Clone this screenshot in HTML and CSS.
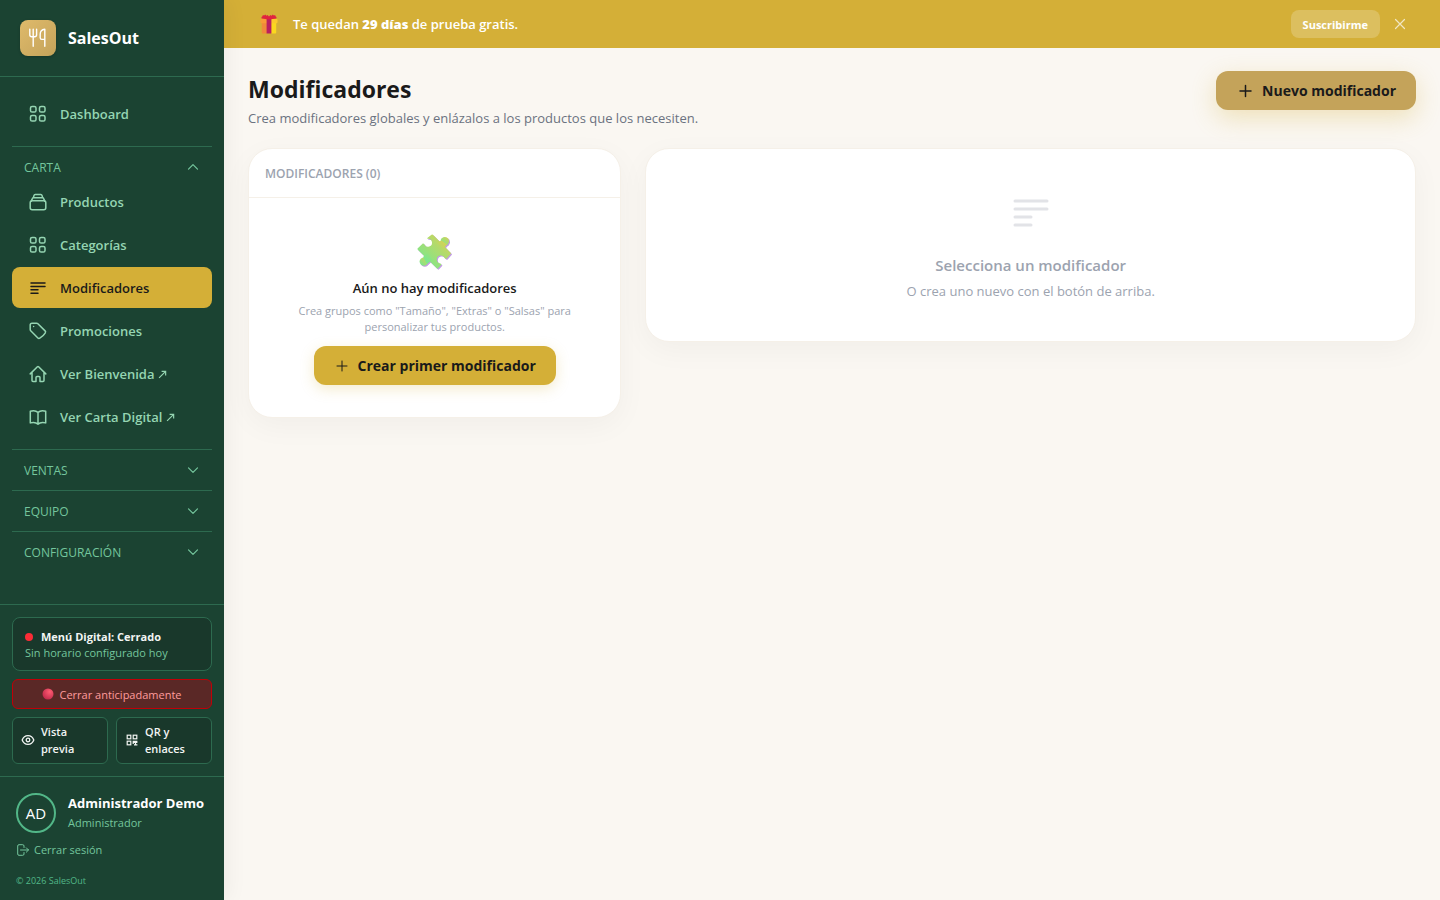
FILE: index.html
```html
<!DOCTYPE html>
<html lang="es">
<head>
  <meta charset="UTF-8">
  <meta name="viewport" content="width=device-width, initial-scale=1.0">
  <title>Modificadores - SalesOut</title>
  <link rel="stylesheet" href="styles.css">
</head>
<body>
  <div class="app">
    <aside class="sidebar">
      <div class="brand">
        <div class="brand-logo">
          <svg width="20" height="20" viewBox="0 0 20 20" fill="none" stroke="currentColor" stroke-width="1.4" stroke-linecap="round" stroke-linejoin="round">
            <path d="M1.800 1.300v5.400a2 2 0 0 0 2 2h2.800a2 2 0 0 0 2-2V1.300M5.200 1.300v17M16.800 18.300V1.300c-3 .3-4.600 2.300-4.600 5v3.400c0 1 .7 1.700 1.700 1.700h2.900"/>
          </svg>
        </div>
        <span class="brand-name">SalesOut</span>
      </div>

      <nav class="nav">
        <a class="nav-link" href="#">
          <svg class="icon" viewBox="0 0 18 18"><rect x="1.500" y="1.500" width="5.500" height="5.500" rx="1.600"/><rect x="10.500" y="1.500" width="5.500" height="5.500" rx="1.600"/><rect x="1.500" y="10.500" width="5.500" height="5.500" rx="1.600"/><rect x="10.500" y="10.500" width="5.500" height="5.500" rx="1.600"/></svg>
          Dashboard
        </a>
        <div class="nav-section open">
          <button class="nav-toggle" type="button" aria-expanded="true">
            CARTA
            <svg class="chevron" viewBox="0 0 14 14"><path d="M2.500 9.200 7 4.700l4.500 4.500"/></svg>
          </button>
          <div class="nav-list">
            <a class="nav-link" href="#">
              <svg class="icon" viewBox="0 0 18 18"><rect x="1.200" y="7.800" width="15.600" height="9" rx="2"/><path d="M2.300 8.100 3.300 5.600c.2-.6.700-.9 1.300-.9h8.800c.6 0 1.100.3 1.300.9l1 2.500M4.400 4.700l.5-2.100c.2-.7.600-1.100 1.300-1.100h5.600c.7 0 1.100.4 1.300 1.100l.5 2.100"/></svg>
              Productos
            </a>
            <a class="nav-link" href="#">
              <svg class="icon" viewBox="0 0 18 18"><rect x="1.500" y="1.500" width="5.500" height="5.500" rx="1.600"/><rect x="10.500" y="1.500" width="5.500" height="5.500" rx="1.600"/><rect x="1.500" y="10.500" width="5.500" height="5.500" rx="1.600"/><rect x="10.500" y="10.500" width="5.500" height="5.500" rx="1.600"/></svg>
              Categorías
            </a>
            <a class="nav-link active" href="#" aria-current="page">
              <svg class="icon" viewBox="0 0 18 18"><path d="M2 4h14M2 7.400h14M2 10.800h7M2 14.200h7"/></svg>
              Modificadores
            </a>
            <a class="nav-link" href="#">
              <svg class="icon" viewBox="0 0 18 18"><path d="M7.600 1.200H3a1.800 1.800 0 0 0-1.800 1.800v4.600c0 .5.200.9.500 1.200l7.200 7.200c.5.500 1.300.6 1.900.2a16 16 0 0 0 5.500-5.400c.4-.6.300-1.400-.2-1.900L8.900 1.700c-.3-.3-.8-.5-1.300-.5z"/><path d="M4.600 4.600h.01"/></svg>
              Promociones
            </a>
            <a class="nav-link" href="#">
              <svg class="icon" viewBox="0 0 18 18"><path d="M1.200 8.900 8.400 1.700a.9.900 0 0 1 1.200 0l7.200 7.200M3 7.200v8.200c0 .6.500 1 1 1h3v-4a1 1 0 0 1 1-1h2a1 1 0 0 1 1 1v4h3c.6 0 1-.5 1-1V7.200"/></svg>
              <span>Ver Bienvenida <svg class="ext" viewBox="0 0 10 10"><path d="M1.200 8.800 8.500 1.500M4 1.500h4.500V6"/></svg></span>
            </a>
            <a class="nav-link" href="#">
              <svg class="icon" viewBox="0 0 18 18"><path d="M9 4.400a6.600 6.600 0 0 0-4.500-1.700c-1.100 0-2.200.2-3.200.6v11.600a9.200 9.200 0 0 1 3.200-.5c1.700 0 3.300.6 4.500 1.700m0-11.700a6.600 6.600 0 0 1 4.500-1.700c1.100 0 2.200.2 3.200.6v11.600a9.200 9.200 0 0 0-3.200-.5c-1.700 0-3.300.6-4.500 1.700m0-11.700v11.700"/></svg>
              <span>Ver Carta Digital <svg class="ext" viewBox="0 0 10 10"><path d="M1.200 8.800 8.500 1.500M4 1.500h4.500V6"/></svg></span>
            </a>
          </div>
        </div>
        <div class="nav-section">
          <button class="nav-toggle" type="button" aria-expanded="false">
            VENTAS
            <svg class="chevron" viewBox="0 0 14 14"><path d="M2.500 4.800 7 9.300l4.500-4.500"/></svg>
          </button>
        </div>
        <div class="nav-section">
          <button class="nav-toggle" type="button" aria-expanded="false">
            EQUIPO
            <svg class="chevron" viewBox="0 0 14 14"><path d="M2.500 4.800 7 9.300l4.500-4.500"/></svg>
          </button>
        </div>
        <div class="nav-section">
          <button class="nav-toggle" type="button" aria-expanded="false">
            CONFIGURACIÓN
            <svg class="chevron" viewBox="0 0 14 14"><path d="M2.500 4.800 7 9.300l4.500-4.500"/></svg>
          </button>
        </div>
      </nav>

      <div class="status">
        <div class="status-card">
          <div class="status-title"><span class="dot"></span>Menú Digital: Cerrado</div>
          <div class="status-text">Sin horario configurado hoy</div>
        </div>
        <button class="btn-close-early" type="button">
          <svg width="12" height="12" viewBox="0 0 12 12">
            <defs><radialGradient id="red-ball" cx="0.65" cy="0.3" r="0.75"><stop offset="0" stop-color="#ff5c72"/><stop offset="1" stop-color="#c22a4c"/></radialGradient></defs>
            <circle cx="6" cy="6" r="5.500" fill="url(#red-ball)"/>
          </svg>
          Cerrar anticipadamente
        </button>
        <div class="status-row">
          <button class="btn-small" type="button">
            <svg width="14" height="14" viewBox="0 0 14 14" fill="none" stroke="currentColor" stroke-width="1.300"><path d="M1.200 7C2.200 4.300 4.400 2.700 7 2.700S11.800 4.300 12.800 7c-1 2.700-3.200 4.300-5.800 4.300S2.200 9.700 1.200 7z"/><circle cx="7" cy="7" r="1.800"/></svg>
            <span>Vista previa</span>
          </button>
          <button class="btn-small" type="button">
            <svg width="14" height="14" viewBox="0 0 14 14" fill="none" stroke="currentColor" stroke-width="1.200"><rect x="2.200" y="2.200" width="3.600" height="3.600"/><rect x="8.200" y="2.200" width="3.600" height="3.600"/><rect x="2.200" y="8.200" width="3.600" height="3.600"/><path d="M7.600 8.300h4.800M7.600 9.500h4.800M8.200 9v2M10.500 9v3.400M9 11.800h3.400"/></svg>
            <span>QR y enlaces</span>
          </button>
        </div>
      </div>

      <div class="account">
        <div class="user">
          <div class="avatar">AD</div>
          <div>
            <div class="user-name">Administrador Demo</div>
            <div class="user-role">Administrador</div>
          </div>
        </div>
        <button class="logout" type="button">
          <svg width="14" height="14" viewBox="0 0 14 14" fill="none" stroke="currentColor" stroke-linecap="round" stroke-linejoin="round"><path d="M8 4.500V3a1.300 1.300 0 0 0-1.300-1.300H3A1.300 1.300 0 0 0 1.700 3v8A1.300 1.300 0 0 0 3 12.300h3.700A1.300 1.300 0 0 0 8 11V9.500M4.500 7h8M10.300 4.800 12.500 7l-2.200 2.200"/></svg>
          Cerrar sesión
        </button>
        <p class="copyright">© 2026 SalesOut</p>
      </div>
    </aside>

    <div class="content">
      <div class="banner">
        <svg class="gift" width="18" height="20" viewBox="0 0 18 20">
          <path d="M1.800 8H7v11.500H2.800a1 1 0 0 1-1-1z" fill="#f08a3a"/>
          <path d="M11 8h5.200v10.500a1 1 0 0 1-1 1H11z" fill="#fbd81f"/>
          <path d="M1.500 5H7v4.200H1.500a1 1 0 0 1-1-1V6a1 1 0 0 1 1-1z" fill="#f79b36"/>
          <path d="M11 5h5.500a1 1 0 0 1 1 1v2.200a1 1 0 0 1-1 1H11z" fill="#fcc92b"/>
          <path d="M6.600 5h4.800v14.500H6.600z" fill="#b9205f"/>
          <path d="M9 5.600 1.600 4.600C1.200 3.400 1.700 2.200 2.800 1.900L2.600.9l1.600.6L5.200.4l1.200 1.300L7.600 1 9 2.400 10.400 1l1.200.7L12.800.4l1 1.100 1.600-.6-.2 1c1.100.3 1.600 1.500 1.200 2.700z" fill="#e0243f"/>
        </svg>
        <p class="banner-text">Te quedan <strong>29 días</strong> de prueba gratis.</p>
        <button class="btn-subscribe" type="button">Suscribirme</button>
        <button class="btn-dismiss" type="button" aria-label="Cerrar">
          <svg width="12" height="12" viewBox="0 0 12 12" fill="none" stroke="currentColor" stroke-width="1.200" stroke-linecap="round"><path d="M1.500 1.500l9 9M10.500 1.500l-9 9"/></svg>
        </button>
      </div>

      <main class="page">
        <header class="page-header">
          <div>
            <h1>Modificadores</h1>
            <p class="subtitle">Crea modificadores globales y enlázalos a los productos que los necesiten.</p>
          </div>
          <button class="btn btn-dark" type="button">
            <svg width="16" height="16" viewBox="0 0 16 16" fill="none" stroke="currentColor" stroke-width="1.500" stroke-linecap="round"><path d="M7.500 2.500v11M2 8h11"/></svg>
            Nuevo modificador
          </button>
        </header>

        <div class="grid">
          <section class="card card-list">
            <h2 class="card-header">MODIFICADORES (0)</h2>
            <div class="empty">
              <svg class="puzzle" width="36" height="36" viewBox="0 0 36 36">
                <defs>
                  <linearGradient id="puzzle-fill" x1="0" y1="1" x2="1" y2="0"><stop offset="0" stop-color="#6deb96"/><stop offset="1" stop-color="#dcd052"/></linearGradient>
                  <g id="puzzle-piece">
                    <path d="M14.500.8a1 1 0 0 1 1.400 0l5.300 5.300 12.400 12.600a1 1 0 0 1 0 1.400l-3.900 4.300c-.7.700-1.600.5-2.100-.3a4 4 0 1 0-4.200 5.300c1 .3 1.200 1.200.5 1.900l-2.800 3a1 1 0 0 1-1.400 0L.8 15.700a1 1 0 0 1 0-1.400l4.500-4.400c.7-.7 1.500-.5 2 .3a4 4 0 1 0 3.300-5.500c-.4-.3-.5-.5-.3-.7z"/>
                    <circle cx="27.800" cy="7.200" r="4.200"/>
                    <circle cx="6.800" cy="27.600" r="4.200"/>
                    <path d="M20 8.500l4.500-2 5.500 4-3.500 4.500zM6 23l4.500-4 5 6.500-5.500 4.500z"/>
                  </g>
                </defs>
                <use href="#puzzle-piece" x="1" y="1" fill="#c39be6"/>
                <use href="#puzzle-piece" fill="url(#puzzle-fill)"/>
              </svg>
              <h3>Aún no hay modificadores</h3>
              <p>Crea grupos como "Tamaño", "Extras" o "Salsas" para personalizar tus productos.</p>
              <button class="btn" type="button">
                <svg width="14" height="14" viewBox="0 0 14 14" fill="none" stroke="currentColor" stroke-linecap="round"><path d="M6 2v10M1 7h10"/></svg>
                Crear primer modificador
              </button>
            </div>
          </section>

          <section class="card card-detail">
            <svg width="40" height="40" viewBox="0 0 40 40" fill="none" stroke="#e2e3e7" stroke-width="3" stroke-linecap="round"><path d="M4 8h32M4 16h32M4 24h16M4 32h16"/></svg>
            <h3>Selecciona un modificador</h3>
            <p>O crea uno nuevo con el botón de arriba.</p>
          </section>
        </div>
      </main>
    </div>
  </div>
</body>
</html>
```
FILE: styles.css
```css
* {
  margin: 0;
  padding: 0;
  box-sizing: border-box;
}

body {
  background-color: #faf7f2;
  color: #1a1a1a;
  font-family: 'Segoe UI', 'Open Sans', sans-serif;
  font-size: 13px;
}

button {
  border: none;
  background: none;
  color: inherit;
  font: inherit;
  cursor: pointer;
}

a {
  color: inherit;
  text-decoration: none;
}

svg {
  flex-shrink: 0;
}

.app {
  display: flex;
  min-height: 100vh;
}

/* sidebar */

.sidebar {
  position: sticky;
  top: 0;
  width: 224px;
  height: 100vh;
  flex-shrink: 0;
  display: flex;
  flex-direction: column;
  background-color: #1b4332;
  box-shadow: 4px 0 20px rgba(0, 0, 0, 0.05);
}

.brand {
  display: flex;
  align-items: center;
  gap: 12px;
  padding: 20px;
  border-bottom: 1px solid #2d6a4f;
}

.brand-logo {
  width: 36px;
  height: 36px;
  border-radius: 8px;
  display: flex;
  align-items: center;
  justify-content: center;
  background: linear-gradient(135deg, #dfba6b, #c4a35a);
  box-shadow: 0 1px 3px rgba(0, 0, 0, 0.2);
  color: #fff;
}

.brand-name {
  color: #fff;
  font-size: 16px;
  font-weight: 700;
}

.nav {
  flex: 1;
  padding: 16px 12px;
  overflow: hidden;
}

.nav-link {
  display: flex;
  align-items: center;
  gap: 13px;
  height: 41px;
  padding: 0 17px;
  border-radius: 8px;
  color: #95d5b2;
  font-weight: 600;
}

.nav-link.active {
  background-color: #d4af37;
  color: #1a1a1a;
}

.icon {
  width: 18px;
  height: 18px;
  fill: none;
  stroke: currentColor;
  stroke-width: 1.5;
  stroke-linecap: round;
  stroke-linejoin: round;
}

.ext {
  width: 9px;
  height: 9px;
  fill: none;
  stroke: currentColor;
  stroke-width: 1.3;
}

.nav-section {
  padding: 8px 0;
  border-top: 1px solid #2d6a4f;
}

.nav-section.open {
  margin-top: 12px;
  padding-bottom: 12px;
}

.nav-toggle {
  width: 100%;
  height: 24px;
  display: flex;
  align-items: center;
  justify-content: space-between;
  padding: 0 12px;
  color: #74c69d;
  font-size: 12px;
}

.chevron {
  width: 14px;
  height: 14px;
  fill: none;
  stroke: currentColor;
  stroke-width: 1.2;
  stroke-linecap: round;
  stroke-linejoin: round;
}

.nav-list {
  display: flex;
  flex-direction: column;
  gap: 2px;
  margin-top: 2px;
}

.status {
  display: flex;
  flex-direction: column;
  gap: 8px;
  padding: 12px;
  border-top: 1px solid #2d6a4f;
  border-bottom: 1px solid #2d6a4f;
  font-size: 11px;
}

.status-card {
  padding: 11px 12px 9px;
  border: 1px solid #2d6a4f;
  border-radius: 8px;
  background-color: #19382b;
  line-height: 16px;
}

.status-title {
  display: flex;
  align-items: center;
  gap: 8px;
  color: #f2f5f3;
  font-weight: 700;
}

.dot {
  width: 8px;
  height: 8px;
  border-radius: 50%;
  background-color: #fb2c36;
}

.status-text {
  color: #74c69d;
}

.btn-close-early {
  height: 30px;
  display: flex;
  align-items: center;
  justify-content: center;
  gap: 5px;
  border: 1px solid #c10007;
  border-radius: 6px;
  background-color: #5a2826;
  color: #ff9c9c;
  font-weight: 500;
}

.status-row {
  display: flex;
  gap: 8px;
}

.btn-small {
  flex: 1;
  display: flex;
  align-items: center;
  gap: 6px;
  padding: 5px 8px 6px;
  border: 1px solid #2d6a4f;
  border-radius: 6px;
  background-color: #19382b;
  color: #f2f5f3;
  font-weight: 600;
  line-height: 17px;
  text-align: left;
}

.account {
  padding: 16px 16px 12px;
}

.user {
  display: flex;
  align-items: center;
  gap: 12px;
  line-height: 19px;
}

.avatar {
  width: 40px;
  height: 40px;
  display: flex;
  align-items: center;
  justify-content: center;
  border: 2px solid #52b788;
  border-radius: 50%;
  color: #fff;
  font-size: 15px;
}

.user-name {
  color: #fff;
  font-weight: 700;
}

.user-role {
  color: #74c69d;
  font-size: 11px;
}

.logout {
  display: flex;
  align-items: center;
  gap: 4px;
  margin-top: 9px;
  color: #74c69d;
  font-size: 11px;
  line-height: 16px;
}

.copyright {
  margin-top: 16px;
  color: #52b788;
  font-size: 9px;
  line-height: 14px;
}

/* content */

.content {
  flex: 1;
  min-width: 0;
}

.banner {
  display: flex;
  align-items: center;
  height: 48px;
  padding: 0 26px 0 36px;
  background-color: #d4af37;
  color: #fff;
}

.gift {
  margin-right: 15px;
}

.banner-text {
  flex: 1;
  font-weight: 600;
}

.btn-subscribe {
  height: 28px;
  padding: 0 12px;
  border-radius: 8px;
  background-color: rgba(255, 255, 255, 0.2);
  font-size: 11px;
  font-weight: 700;
}

.btn-dismiss {
  display: flex;
  margin-left: 6px;
  padding: 8px;
  opacity: 0.7;
}

.page {
  padding: 23px 24px;
}

.page-header {
  display: flex;
  align-items: flex-start;
  justify-content: space-between;
  margin-bottom: 20px;
}

h1 {
  font-size: 23px;
  font-weight: 700;
  line-height: 37px;
}

.subtitle {
  color: #6b7280;
  line-height: 20px;
}

.btn {
  height: 39px;
  display: inline-flex;
  align-items: center;
  gap: 8px;
  padding: 0 20px 0 22px;
  border-radius: 12px;
  background-color: #d4af37;
  box-shadow: 0 4px 14px rgba(212, 175, 55, 0.25);
  font-size: 14px;
  font-weight: 700;
}

.btn-dark {
  background-color: #c4a35a;
  box-shadow: 0 8px 24px rgba(212, 175, 55, 0.3);
}

.grid {
  display: grid;
  grid-template-columns: repeat(12, 1fr);
  align-items: start;
  gap: 24px;
}

.card {
  border: 1px solid #f5f0e8;
  border-radius: 24px;
  background-color: #fff;
  box-shadow: 0 8px 30px rgba(0, 0, 0, 0.04);
  text-align: center;
}

.card-list {
  grid-column: span 4;
}

.card-detail {
  grid-column: span 8;
  display: flex;
  flex-direction: column;
  align-items: center;
  padding: 44px 24px 38px;
}

.card-header {
  padding: 17px 16px 15px;
  border-bottom: 1px solid #f5f0e8;
  color: #9ca3af;
  font-size: 12px;
  font-weight: 600;
  line-height: 16px;
  text-align: left;
}

.empty {
  padding: 36px 32px 32px;
}

.puzzle {
  display: block;
  margin: 0 auto 8px;
}

.empty h3 {
  font-size: 13px;
  font-weight: 600;
  line-height: 20px;
}

.empty p {
  margin: 5px 0 11px;
  color: #9ca3af;
  font-size: 11px;
  line-height: 16px;
}

.card-detail h3 {
  margin-top: 18px;
  color: #9ca3af;
  font-size: 15px;
  font-weight: 600;
  line-height: 28px;
}

.card-detail p {
  color: #9ca3af;
  line-height: 24px;
}

@media (max-width: 900px) {
  .card-list,
  .card-detail {
    grid-column: span 12;
  }
}
```
